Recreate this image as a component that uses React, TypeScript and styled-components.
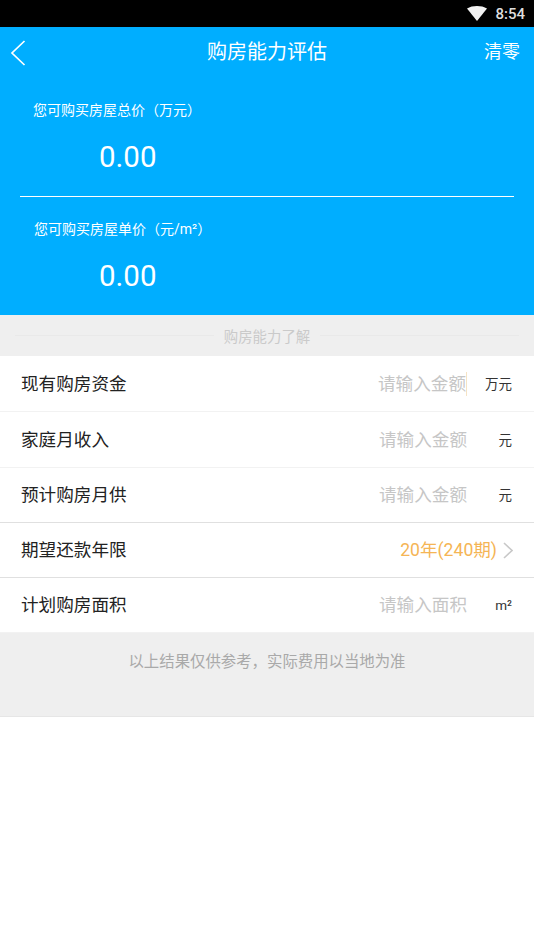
import * as React from 'react'
import styled, {createGlobalStyle} from 'styled-components'

const cjk = `Roboto, "Noto Sans CJK SC", sans-serif`

const Global = createGlobalStyle`
  html, body {
    margin: 0;
    padding: 0;
    background: #fff;
    font-family: ${cjk};
  }
`

const Page = styled.div`
  width: 534px;
  height: 949px;
  overflow: hidden;
  background: #fff;
`

const StatusBar = styled.div`
  height: 27px;
  background: #000;
  display: flex;
  align-items: center;
  justify-content: flex-end;
  padding-right: 9px;
  gap: 8px;
  color: #dedede;
  font-size: 15px;
  font-weight: 500;
`

const Hero = styled.section`
  background: #00aeff;
  height: 288px;
  color: #fff;
`

const NavBar = styled.div`
  height: 51px;
  display: flex;
  align-items: center;
  justify-content: space-between;
  padding: 0 14px 0 10px;
  position: relative;
`

const Title = styled.div`
  position: absolute;
  left: 0;
  right: 0;
  top: 0;
  line-height: 51px;
  text-align: center;
  font-size: 20px;
`

const Clear = styled.div`
  font-size: 18px;
  line-height: 1;
  position: relative;
  top: -1px;
`

const Result = styled.div<{ $left: number; $top: number }>`
  height: ${({$top}) => 118 - $top}px;
  padding: ${({$top}) => $top}px 0 0 ${({$left}) => $left}px;
`

const ResultLabel = styled.div`
  font-size: 14px;
  line-height: 20px;
`

const ResultValue = styled.div<{ $indent: number }>`
  font-family: Roboto, sans-serif;
  font-size: 29.5px;
  line-height: 36px;
  margin: 19px 0 0 ${({$indent}) => $indent}px;
`

const HeroDivider = styled.div`
  height: 1px;
  margin: 0 20px;
  background: #fff;
`

const SectionBar = styled.div`
  height: 41px;
  background: #efefef;
  display: flex;
  align-items: center;
  gap: 10px;
  padding: 0 15px;
  color: #cacaca;
  font-size: 14.4px;
`

const SectionLine = styled.div`
  flex: 1;
  height: 1px;
  background: #e9e9e9;
`

const Row = styled.div<{ $strong?: boolean; $height: number }>`
  height: ${({$height}) => $height}px;
  background: #fff;
  display: flex;
  align-items: center;
  padding: 0 21px;
  border-bottom: 1px solid ${({$strong}) => ($strong ? '#e0e0e0' : '#f2f2f2')};
  &:last-of-type {
    border-bottom: none;
  }
`

const RowLabel = styled.div`
  flex: 1;
  color: #222;
  font-size: 17.6px;
  line-height: 24px;
`

const Placeholder = styled.div<{ $caret?: boolean }>`
  color: #c6c6c6;
  font-size: 17.6px;
  position: relative;
  left: ${({$caret}) => ($caret ? -1 : 0)}px;
  border-right: 1px solid ${({$caret}) => ($caret ? '#f6e3c4' : 'transparent')};
  line-height: 24px;
`

const Unit = styled.div`
  width: 44px;
  margin-right: 1px;
  text-align: right;
  color: #333;
  font-size: 13.5px;
  line-height: 24px;
`

const Term = styled.div`
  color: #f5b555;
  font-size: 17.6px;
  line-height: 24px;
`

const Chevron = styled.svg`
  margin-left: 6px;
  display: block;
`

const Footer = styled.div`
  height: 83px;
  background: #efefef;
  border-bottom: 1px solid #e6e6e6;
  text-align: center;
  color: #a9a9a9;
  font-size: 15.4px;
  line-height: 58px;
`

const rows = [
  {label: '现有购房资金', hint: '请输入金额', unit: '万元', caret: true, height: 55},
  {label: '家庭月收入', hint: '请输入金额', unit: '元', height: 55},
  {label: '预计购房月供', hint: '请输入金额', unit: '元', strong: true, height: 54},
  {label: '期望还款年限', term: '20年(240期)', strong: true, height: 54},
  {label: '计划购房面积', hint: '请输入面积', unit: 'm²', height: 54},
]

const App = () => (
  <Page>
    <Global/>
    <StatusBar>
      <svg width="20" height="15" viewBox="0 0 20 15">
        <path d="M0 2.5 C5.5 -0.8 14.5 -0.8 20 2.5 L10 15 Z" fill="#f2f2f2"/>
      </svg>
      <span>8:54</span>
    </StatusBar>
    <Hero>
      <NavBar>
        <Title>购房能力评估</Title>
        <svg width="16" height="26" viewBox="0 0 16 26" fill="none" stroke="#fff" strokeWidth="1.7">
          <path d="M14.5 1 L2 13 L14.5 25"/>
        </svg>
        <Clear>清零</Clear>
      </NavBar>
      <Result $left={33} $top={22}>
        <ResultLabel>您可购买房屋总价（万元）</ResultLabel>
        <ResultValue $indent={66}>0.00</ResultValue>
      </Result>
      <HeroDivider/>
      <Result $left={34} $top={22}>
        <ResultLabel>您可购买房屋单价（元/m²）</ResultLabel>
        <ResultValue $indent={65}>0.00</ResultValue>
      </Result>
    </Hero>
    <SectionBar>
      <SectionLine/>
      购房能力了解
      <SectionLine/>
    </SectionBar>
    {rows.map(v => (
      <Row key={v.label} $strong={v.strong} $height={v.height}>
        <RowLabel>{v.label}</RowLabel>
        {v.term ? (
          <>
            <Term>{v.term}</Term>
            <Chevron width="10" height="17" viewBox="0 0 10 17" fill="none" stroke="#c8c8c8" strokeWidth="1.6">
              <path d="M1 1 L9 8.5 L1 16"/>
            </Chevron>
          </>
        ) : (
          <>
            <Placeholder $caret={v.caret}>{v.hint}</Placeholder>
            <Unit>{v.unit}</Unit>
          </>
        )}
      </Row>
    ))}
    <Footer>以上结果仅供参考，实际费用以当地为准</Footer>
  </Page>
)

export default App
